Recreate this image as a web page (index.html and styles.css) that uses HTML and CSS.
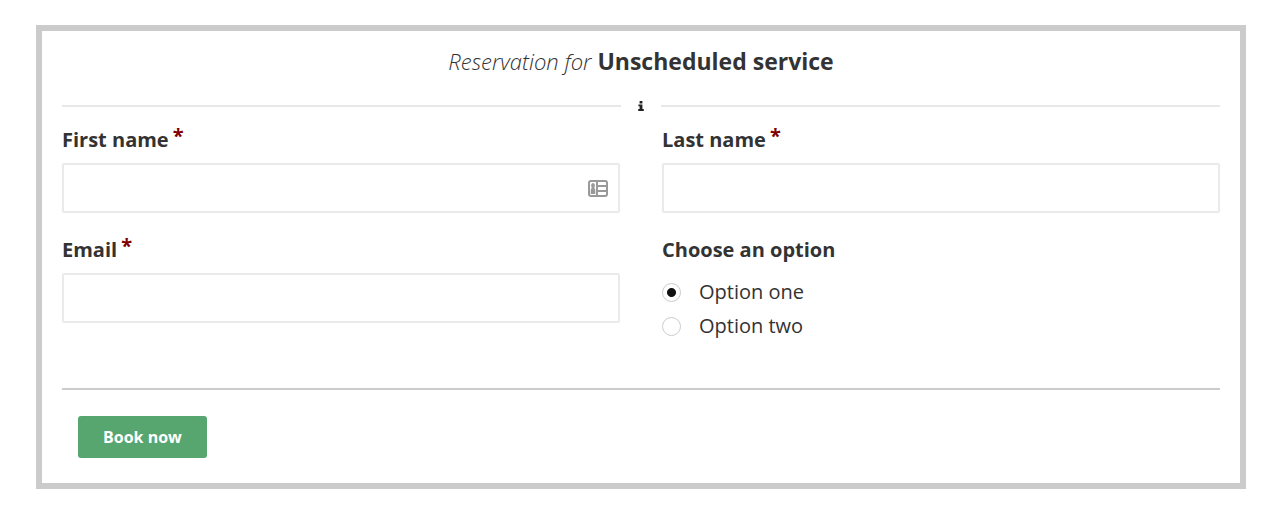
FILE: index.html
```html
<!DOCTYPE html>
<html lang="en">
<head>
    <meta charset="UTF-8">
    <meta name="viewport" content="width=device-width, initial-scale=1.0">
    <title>Reservation</title>
    <link rel="stylesheet" href="styles.css">
</head>
<body>
    <form class="booking">
        <h2 class="title"><em>Reservation for</em> Unscheduled service</h2>

        <div class="divider">
            <svg class="info" viewBox="0 0 6 10" aria-hidden="true">
                <path d="M1.600 0h2.800v2.500H1.600zM.4 3.500h4v4.500h1.400V10H.2V8h1.400V5.300H.4z"/>
            </svg>
        </div>

        <div class="fields">
            <div class="field">
                <label for="first-name">First name<span class="required">*</span></label>
                <div class="input-wrap">
                    <input type="text" id="first-name">
                    <!-- contact card -->
                    <svg class="card-icon" viewBox="0 0 20 17" aria-hidden="true">
                        <rect x="1" y="1" width="18" height="15" rx="2"/>
                        <path d="M9 1v15M9 6h10M9 11h10"/>
                        <path class="person" d="M5 3a2 2.500 0 0 1 1.300 4.300c0 1.300 1 1.800 1 3.500V14H2.700v-3.200c0-1.700 1-2.200 1-3.500A2 2.500 0 0 1 5 3z"/>
                    </svg>
                </div>
            </div>
            <div class="field">
                <label for="last-name">Last name<span class="required">*</span></label>
                <input type="text" id="last-name">
            </div>
            <div class="field">
                <label for="email">Email<span class="required">*</span></label>
                <input type="email" id="email">
            </div>
            <fieldset class="field">
                <legend>Choose an option</legend>
                <label class="option"><input type="radio" name="option" value="one" checked>Option one</label>
                <label class="option"><input type="radio" name="option" value="two">Option two</label>
            </fieldset>
        </div>

        <div class="actions">
            <button type="submit">Book now</button>
        </div>
    </form>
</body>
</html>
```
FILE: styles.css
```css
* {
    margin: 0;
    padding: 0;
    box-sizing: border-box;
}

body {
    background-color: #fff;
    color: #333;
    font-family: "Open Sans", sans-serif;
    font-size: 20px;
    line-height: 28px;
    padding: 25px 34px 25px 36px;
}

.booking {
    border: 6px solid #cbcbcb;
    padding: 14px 20px 25px;
}

.title {
    font-size: 23px;
    line-height: 32px;
    text-align: center;
}

.title em {
    font-size: 22px;
    font-weight: 300;
}

/* line on both sides of the info mark */
.divider {
    display: flex;
    align-items: center;
    gap: 17px;
    margin-top: 20px;
    height: 18px;
}

.divider::before,
.divider::after {
    content: "";
    flex: 1;
    height: 2px;
    background-color: #e8e8e8;
}

.info {
    width: 6px;
    height: 10px;
    fill: #222;
}

.fields {
    display: grid;
    grid-template-columns: 1fr 1fr;
    gap: 23px 42px;
    margin-top: 11px;
    padding-bottom: 45px;
    border-bottom: 2px solid #ccc;
}

.field {
    border: none;
    min-width: 0;
}

.field label,
legend {
    display: block;
    font-weight: 700;
    margin-bottom: 9px;
}

.field legend {
    margin-bottom: 11px;
}

.required {
    color: #800000;
    margin-left: 4px;
    position: relative;
    top: -4px;
}

.input-wrap {
    position: relative;
}

input[type="text"],
input[type="email"] {
    display: block;
    width: 100%;
    height: 50px;
    border: 2px solid #eaeaea;
    border-radius: 2px;
    padding: 0 12px;
    font: inherit;
    color: inherit;
}

.card-icon {
    position: absolute;
    right: 12px;
    top: 17px;
    width: 20px;
    height: 17px;
    fill: none;
    stroke: #999;
    stroke-width: 2;
}

.card-icon .person {
    fill: #999;
    stroke: none;
}

.field .option {
    display: flex;
    align-items: center;
    gap: 18px;
    height: 34px;
    margin: 0;
    font-weight: 400;
}

input[type="radio"] {
    appearance: none;
    width: 19px;
    height: 19px;
    border: 1px solid #ccc;
    border-radius: 50%;
    background-color: #fff;
}

input[type="radio"]:checked {
    background-image: radial-gradient(circle, #111 4px, transparent 5px);
}

.actions {
    padding: 26px 16px 0;
}

button {
    background-color: #57a670;
    border: none;
    border-radius: 3px;
    color: #fff;
    cursor: pointer;
    display: block;
    font: 700 16px/22px "Open Sans", sans-serif;
    padding: 10px 25px;
}
```
